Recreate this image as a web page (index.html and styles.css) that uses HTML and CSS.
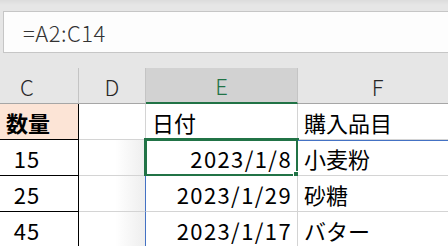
FILE: index.html
```html
<!DOCTYPE html>
<html lang="ja">
<head>
<meta charset="utf-8">
<link rel="stylesheet" href="styles.css">
</head>
<body>
<div class="app">
  <div class="formula-area">
    <div class="formula-box">=A2:C14</div>
  </div>
  <div class="sheet">
    <div class="colhead c-col">C</div>
    <div class="colhead">D</div>
    <div class="colhead sel">E</div>
    <div class="colhead">F</div>

    <div class="cell c-col peach bold left">数量</div>
    <div class="cell"></div>
    <div class="cell left">日付</div>
    <div class="cell left">購入品目</div>

    <div class="cell c-col num">15</div>
    <div class="cell shade"></div>
    <div class="cell right active">2023/1/8<span class="selbox"><span class="handle"></span></span></div>
    <div class="cell left spill-top">小麦粉</div>

    <div class="cell c-col num">25</div>
    <div class="cell shade"></div>
    <div class="cell right spill-left">2023/1/29</div>
    <div class="cell left">砂糖</div>

    <div class="cell c-col num">45</div>
    <div class="cell shade"></div>
    <div class="cell right spill-left">2023/1/17</div>
    <div class="cell left">バター</div>
  </div>
</div>
</body>
</html>
```

FILE: styles.css
```css
* { box-sizing: border-box; }
html, body {
  margin: 0;
  padding: 0;
  width: 448px;
  height: 246px;
  overflow: hidden;
  background: #e6e6e6;
  font-family: "Noto Sans CJK JP", "Noto Sans", sans-serif;
  color: #000;
}
.app {
  width: 448px;
}
.formula-area {
  padding: 11px 0 15px 3px;
  background: linear-gradient(to bottom, #dcdcdc 0px, #e6e6e6 5px);
}
.formula-box {
  width: 460px;
  height: 42px;
  background: #fdfdfd;
  border: 1px solid #c6c6c6;
  border-right: none;
  padding-left: 19px;
  font-size: 22px;
  line-height: 40px;
  color: #333;
  font-weight: 300;
  letter-spacing: 0.5px;
}
.sheet {
  display: grid;
  grid-template-columns: 79px 67px 152px 160px;
  grid-auto-rows: 36px;
  width: 458px;
}
.colhead {
  background: #e6e6e6;
  border-right: 1px solid #c4c4c4;
  border-bottom: 1px solid #a6a6a6;
  font-size: 22px;
  font-weight: 300;
  color: #262626;
  display: flex;
  align-items: center;
  justify-content: center;
  line-height: 1;
}
.colhead.c-col {
  padding-right: 24px;
}
.colhead.sel {
  background: #d2d2d2;
  color: #217346;
  border-bottom: 2px solid #217346;
}
.cell {
  background: #fff;
  border-right: 1px solid #d4d4d4;
  border-bottom: 1px solid #d4d4d4;
  font-size: 22px;
  display: flex;
  align-items: center;
  line-height: 1;
  white-space: nowrap;
  position: relative;
}
.cell.c-col {
  border-right-color: #000;
  border-bottom-color: #000;
}
.peach { background: #fce4d6; }
.bold { font-weight: 700; }
.left { padding-left: 6px; }
.num { justify-content: center; padding-right: 24px; letter-spacing: 1px; }
.right { justify-content: flex-end; padding-right: 5px; letter-spacing: 1.4px; }
.shade {
  background: linear-gradient(to right, #fff 55%, #eeeeee 100%);
}
.spill-left {
  border-left: 1px solid #4472c4;
  margin-left: -1px;
}
.spill-top {
  box-shadow: inset 0 1px 0 #4472c4;
}
.selbox {
  position: absolute;
  left: -2px;
  top: -2px;
  width: 155px;
  height: 39px;
  border: 3px solid #217346;
  pointer-events: none;
}
.handle {
  position: absolute;
  right: -5px;
  bottom: -5px;
  width: 8px;
  height: 8px;
  background: #217346;
  border: 1px solid #fff;
}
```
